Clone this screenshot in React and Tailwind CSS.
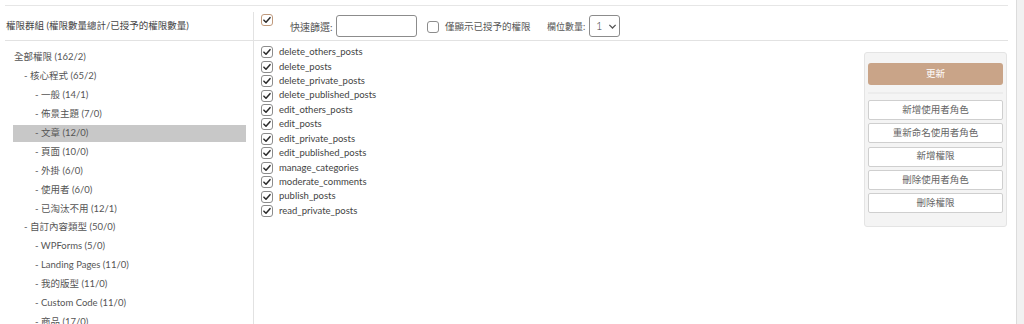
import React from 'react';

const tree = [
  { label: '全部權限 (162/2)', level: 0 },
  { label: '- 核心程式 (65/2)', level: 1 },
  { label: '- 一般 (14/1)', level: 2 },
  { label: '- 佈景主題 (7/0)', level: 2 },
  { label: '- 文章 (12/0)', level: 2, active: true },
  { label: '- 頁面 (10/0)', level: 2 },
  { label: '- 外掛 (6/0)', level: 2 },
  { label: '- 使用者 (6/0)', level: 2 },
  { label: '- 已淘汰不用 (12/1)', level: 2 },
  { label: '- 自訂內容類型 (50/0)', level: 1 },
  { label: '- WPForms (5/0)', level: 2 },
  { label: '- Landing Pages (11/0)', level: 2 },
  { label: '- 我的版型 (11/0)', level: 2 },
  { label: '- Custom Code (11/0)', level: 2 },
  { label: '- 商品 (17/0)', level: 2 },
];

const caps = [
  'delete_others_posts',
  'delete_posts',
  'delete_private_posts',
  'delete_published_posts',
  'edit_others_posts',
  'edit_posts',
  'edit_private_posts',
  'edit_published_posts',
  'manage_categories',
  'moderate_comments',
  'publish_posts',
  'read_private_posts',
];

const actions = ['新增使用者角色', '重新命名使用者角色', '新增權限', '刪除使用者角色', '刪除權限'];

const indent = ['pl-[1px]', 'pl-[11px]', 'pl-[22px]'];

function Check({ checked = true, brown = false }) {
  return (
    <span
      className={`flex items-center justify-center w-[12px] h-[12px] rounded-[3px] border bg-white ${
        brown ? 'border-[#c09a7d]' : 'border-[#8c8c8c]'
      }`}
    >
      {checked && (
        <svg viewBox="0 0 12 12" className="w-[10px] h-[10px]">
          <path d="M2.3 6.2 L4.8 8.6 L9.6 3.2" fill="none" stroke="#2a2a2a" strokeWidth="1.8" strokeLinecap="round" strokeLinejoin="round" />
        </svg>
      )}
    </span>
  );
}

export default function App() {
  return (
    <div
      className="flex h-[324px] w-[1024px] overflow-hidden bg-white text-[9.5px] text-[#444]"
      style={{ fontFamily: 'Lato, "Noto Sans CJK TC", sans-serif' }}
    >
      <div className="ml-[5px] mt-[5px] w-[1003px] border-t border-[#e6e6e6] pt-[6px]">
        <div className="grid grid-cols-[249px_1fr] h-full">
          {/* header */}
          <div className="flex h-[29px] items-center border-b border-r border-[#e2e2e2] pl-[1px] text-[#444]">
            權限群組 (權限數量總計/已授予的權限數量)
          </div>
          <div className="flex h-[29px] items-start border-b border-[#e2e2e2] pl-[7px] pt-[2px]">
            <Check brown />
            <span className="ml-[17px] mt-[6px] w-[43px] whitespace-nowrap text-[10px] text-[#555]">快速篩選:</span>
            <span className="ml-[3px] mt-[1px] h-[22px] w-[81px] rounded-[3px] border border-[#8c8c8c] bg-white" />
            <span className="ml-[10px] mt-[7px]">
              <Check checked={false} />
            </span>
            <span className="ml-[6px] mt-[6px] w-[90px] whitespace-nowrap text-[#555]">僅顯示已授予的權限</span>
            <span className="ml-[12px] mt-[6px] w-[42px] whitespace-nowrap text-[9px] text-[#555]">欄位數量:</span>
            <span className="mt-[1px] flex h-[22px] w-[31px] items-center rounded-[3px] border border-[#8c8c8c] bg-white pl-[6px] text-[11px] font-light text-[#444]">
              1
              <svg viewBox="0 0 10 10" className="ml-[6px] h-[9px] w-[9px]">
                <path d="M1.5 3.2 L5 6.7 L8.5 3.2" fill="none" stroke="#555" strokeWidth="1.4" />
              </svg>
            </span>
          </div>

          {/* tree */}
          <div className="border-r border-[#e2e2e2] pl-[8px] pr-[7px] pt-[8px]">
            <div className="flex flex-col gap-[1.9px]">
              {tree.map((t) => (
                <div
                  key={t.label}
                  className={`flex h-[17px] items-center whitespace-nowrap text-[#555] ${indent[t.level]} ${
                    t.active ? 'bg-[#c8c8c8]' : ''
                  }`}
                >
                  {t.label}
                </div>
              ))}
            </div>
          </div>

          {/* capabilities + actions */}
          <div className="flex items-start">
            <div className="flex-1 pl-[7px] pt-[4px]">
              {caps.map((c) => (
                <div key={c} className="flex h-[14.45px] items-center gap-[6px] text-[#444]">
                  <Check />
                  <span>{c}</span>
                </div>
              ))}
            </div>
            <div className="mr-[1px] mt-[11px] w-[143px] rounded-[3px] border border-[#e4e4e4] bg-[#f4f4f4] px-[3px] pt-[10px] pb-[13px]">
              <button className="flex h-[22px] w-full items-center justify-center rounded-[3px] bg-[#c9a488] text-white">
                更新
              </button>
              <div className="mt-[7px] mb-[6px] h-[2px] bg-[#ececec]" />
              <div className="flex flex-col gap-[3.3px]">
                {actions.map((a) => (
                  <button
                    key={a}
                    className="flex h-[20px] w-full items-center justify-center rounded-[2px] border border-[#cfcfcf] bg-white text-[#666]"
                  >
                    {a}
                  </button>
                ))}
              </div>
            </div>
          </div>
        </div>
      </div>
      <div className="ml-[8px] h-full flex-1 border-l border-[#dcdcdc] bg-[#f1f1f1]" />
    </div>
  );
}
